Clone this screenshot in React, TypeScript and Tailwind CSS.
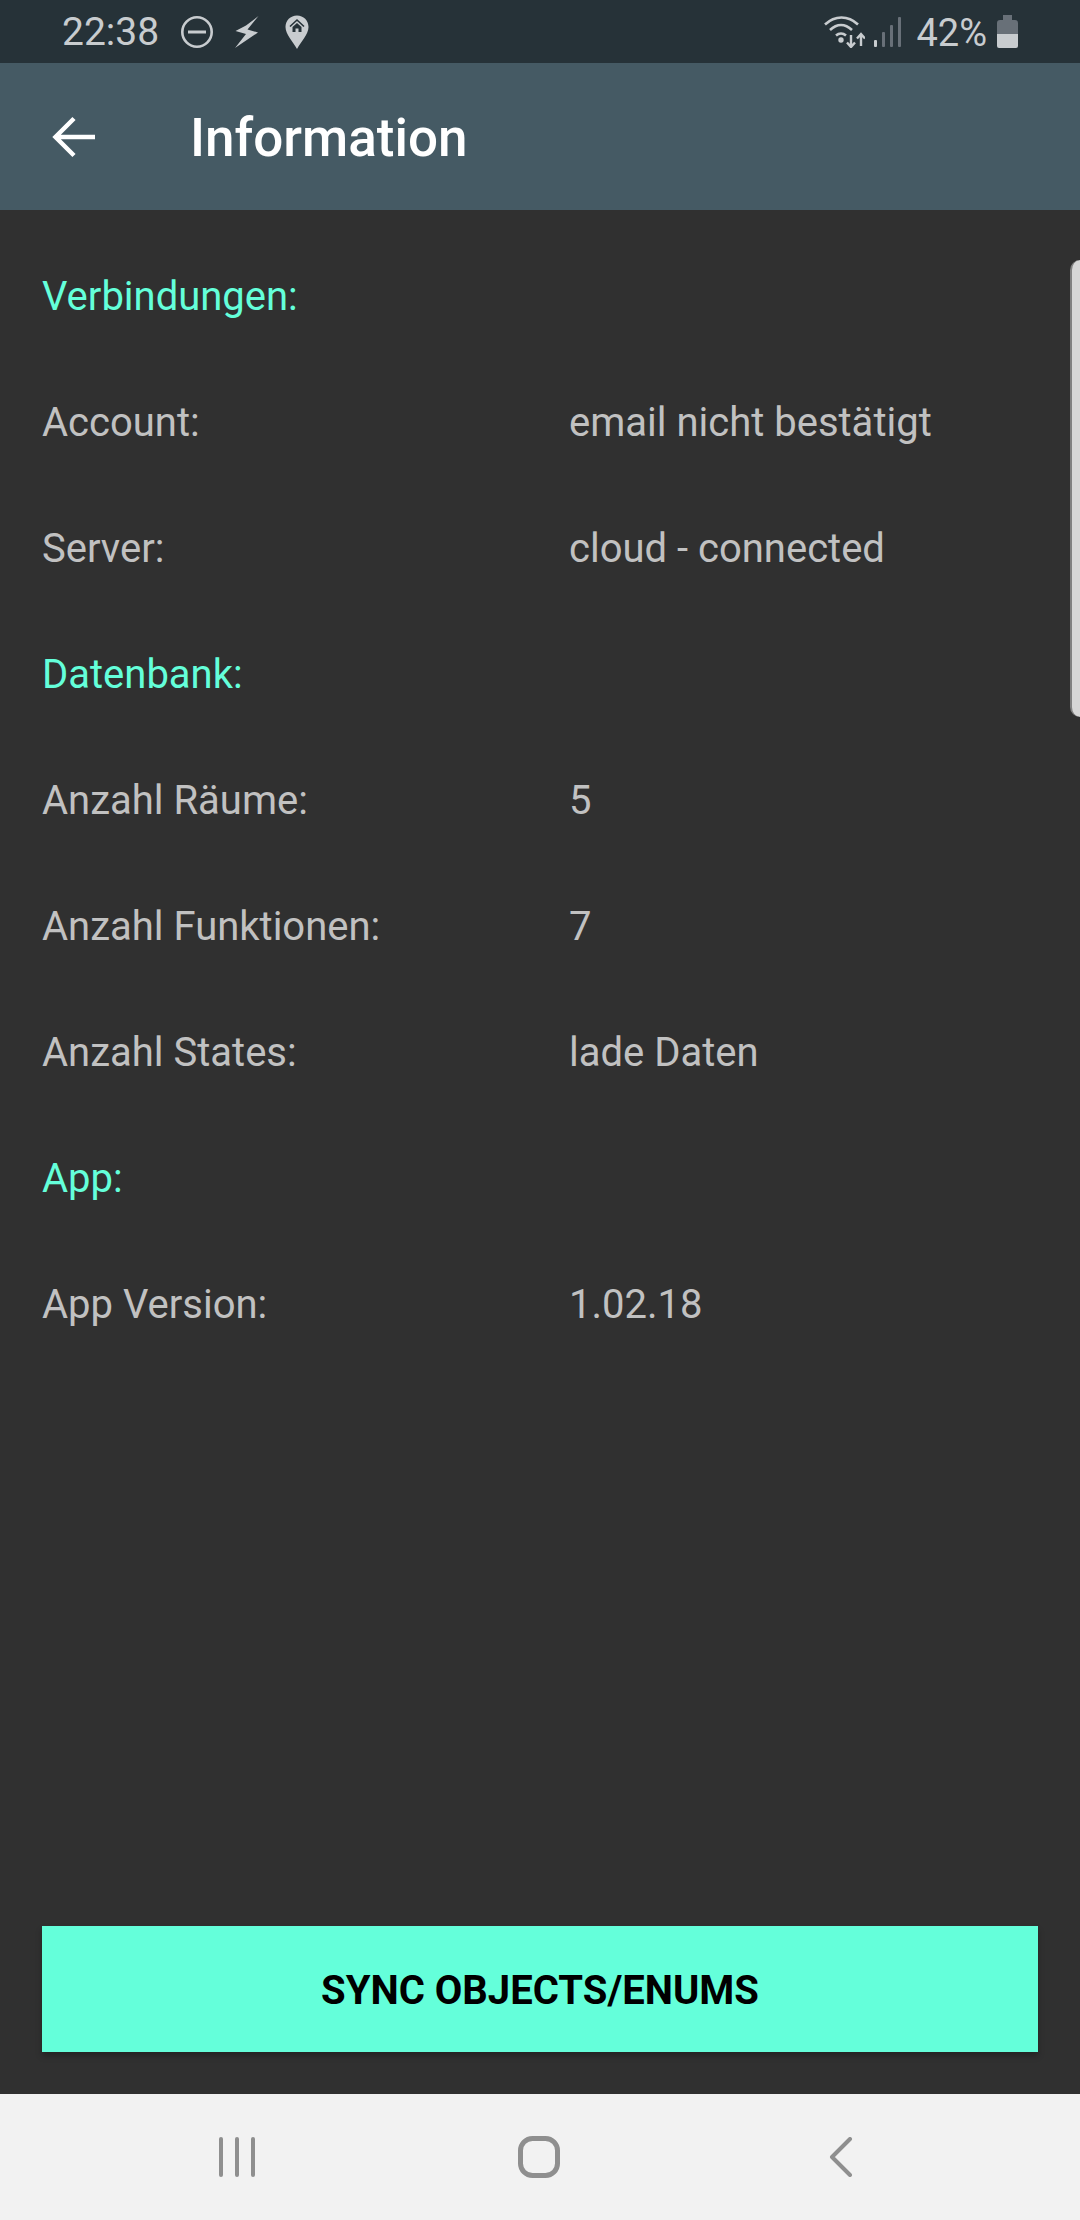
const sections = [
  { title: 'Verbindungen:', rows: [['Account:', 'email nicht bestätigt'], ['Server:', 'cloud - connected']] },
  { title: 'Datenbank:', rows: [['Anzahl Räume:', '5'], ['Anzahl Funktionen:', '7'], ['Anzahl States:', 'lade Daten']] },
  { title: 'App:', rows: [['App Version:', '1.02.18']] },
]

function StatusBar() {
  return (
    <div className="flex h-[63px] items-center justify-between bg-[#263238] pl-[62px] pr-[62px] text-[#c8cccf]">
      <div className="flex items-center">
        <span className="pt-[2px] text-[39px] leading-none">22:38</span>
        <svg className="ml-[22px]" width="32" height="32" viewBox="0 0 32 32" fill="none" stroke="currentColor">
          <circle cx="16" cy="16" r="14.700" strokeWidth="2.600" />
          <path d="M7 16h18" strokeWidth="3" />
        </svg>
        <svg className="ml-[22px]" width="24" height="32" viewBox="0 0 24 32" fill="currentColor">
          <path d="M23.500 0 L11 9.500 L0.500 15 L11 18 L0 32 L23 16.500 L12.500 13.500 Z" />
        </svg>
        <svg className="ml-[26px]" width="24" height="34" viewBox="0 0 24 34">
          <path d="M12 0.500C5.500 0.500 0.500 5.500 0.500 12c0 7 7.500 15 11.500 22 4-7 11.500-15 11.500-22C23.500 5.500 18.500 0.500 12 0.500Z" fill="currentColor" />
          <path d="M5 11.500 12 5l7 6.500" fill="none" stroke="#263238" strokeWidth="1.600" />
          <path d="M7.500 12 12 8l4.500 4v5h-3v-3.500h-3V17h-3Z" fill="#263238" />
        </svg>
      </div>
      <div className="flex items-center">
        <svg width="41" height="32" viewBox="0 0 41 32" fill="none" stroke="currentColor" strokeWidth="2.600">
          <path d="M1 8.500C11 -0.800 24 -0.800 34 8.500" />
          <path d="M6 14C13 7.500 21 7.500 28 14" />
          <path d="M12 19.500C15 17 19 17 22 19.500" />
          <circle cx="17" cy="24" r="1.400" fill="currentColor" />
          <path d="M27 19v11M23 26.500l4 4.500 4-4.500" strokeWidth="2.400" />
          <path d="M37 30V19M33 22.500l4-4.500 4 4.500" strokeWidth="2.400" />
        </svg>
        <svg className="ml-[9px]" width="27" height="30" viewBox="0 0 27 30">
          <rect x="0" y="23" width="3" height="7" rx="1" fill="#c8cccf" />
          <rect x="8" y="15" width="3" height="15" rx="1" fill="#687078" />
          <rect x="16" y="8" width="3" height="22" rx="1" fill="#687078" />
          <rect x="24" y="0" width="3" height="30" rx="1" fill="#687078" />
        </svg>
        <span className="ml-[15px] pt-[2px] text-[38px] leading-none">42%</span>
        <svg className="ml-[10px]" width="21" height="33" viewBox="0 0 21 33">
          <path d="M6 0h9v5h3a3 3 0 0 1 3 3v11H0V8a3 3 0 0 1 3-3h3Z" fill="#687078" />
          <path d="M0 19h21v12a2 2 0 0 1-2 2H2a2 2 0 0 1-2-2Z" fill="#c8cccf" />
        </svg>
      </div>
    </div>
  )
}

function NavBar() {
  return (
    <div className="flex h-[126px] items-center justify-center bg-[#f2f2f2] pr-[2px]">
      <div className="flex w-[302px] justify-center">
        <svg width="36" height="40" viewBox="0 0 36 40" fill="#8f8f8f">
          <rect x="0" y="0" width="4" height="40" rx="2" />
          <rect x="16" y="0" width="4" height="40" rx="2" />
          <rect x="32" y="0" width="4" height="40" rx="2" />
        </svg>
      </div>
      <div className="flex w-[302px] justify-center">
        <svg width="42" height="42" viewBox="0 0 42 42" fill="none" stroke="#8f8f8f" strokeWidth="5">
          <rect x="2.500" y="2.500" width="37" height="37" rx="12" />
        </svg>
      </div>
      <div className="flex w-[302px] justify-center">
        <svg width="24" height="40" viewBox="0 0 24 40" fill="none" stroke="#8f8f8f" strokeWidth="4" strokeLinecap="round" strokeLinejoin="round">
          <path d="M21 2 3 20l18 18" />
        </svg>
      </div>
    </div>
  )
}

export default function App() {
  return (
    <div className="relative flex h-[2220px] w-[1080px] flex-col overflow-hidden bg-[#303030] font-['Roboto',sans-serif]">
      <StatusBar />
      <div className="flex h-[147px] items-center bg-[#455a64]">
        <svg className="ml-[52px]" width="44" height="42" viewBox="0 0 44 42" fill="none" stroke="white" strokeWidth="4.500">
          <path d="M22 2.500 3.500 21 22 39.500M3.500 21H43" />
        </svg>
        <span className="ml-[94px] pt-[4px] text-[53px] font-medium leading-none text-white">Information</span>
      </div>
      <div className="relative flex flex-1 flex-col px-[42px] pt-[24px]">
        {sections.map((s) => (
          <div key={s.title}>
            <div className="flex h-[126px] items-center text-[40px] text-[#64ffda]">{s.title}</div>
            {s.rows.map(([label, value]) => (
              <div key={label} className="flex h-[126px] items-center text-[40px] text-[#c1c1c1]">
                <span className="w-[527px]">{label}</span>
                <span>{value}</span>
              </div>
            ))}
          </div>
        ))}
        <button className="mt-auto mb-[42px] flex h-[126px] w-full items-center justify-center bg-[#64ffda] pt-[3px] text-[40px] font-bold text-black shadow-[0_4px_6px_rgba(0,0,0,0.25)]">
          SYNC OBJECTS/ENUMS
        </button>
        <div className="absolute right-0 top-[50px] h-[457px] w-[10px] rounded-l-[10px] border-l-2 border-[#808080] bg-[#d6d6d6]" />
      </div>
      <NavBar />
    </div>
  )
}
